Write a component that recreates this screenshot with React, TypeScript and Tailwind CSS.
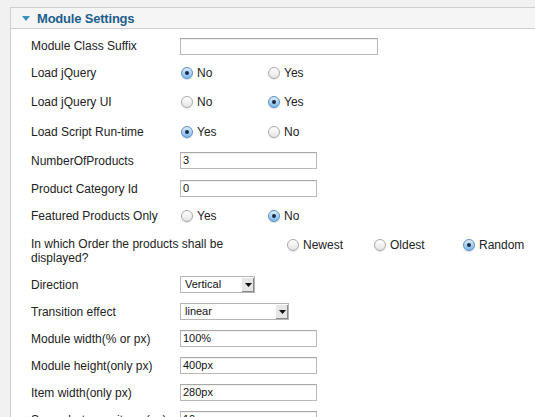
import React from "react";

const font = { fontFamily: '"Liberation Sans", Arial, sans-serif' };

function Radio({ checked, label, w = "w-[87px]" }: { checked?: boolean; label: string; w?: string }) {
  return (
    <div className={`flex items-center ${w} h-[14px]`}>
      {checked ? (
        <span className="ml-[1px] w-[12px] h-[12px] rounded-full border border-[#5b8fc4] bg-gradient-to-b from-[#d9ecfb] to-[#7cb8ec] shadow-[0_1px_1px_rgba(0,0,0,0.15)] flex items-center justify-center">
          <span className="w-[4px] h-[4px] rounded-full bg-[#1b2b44]" />
        </span>
      ) : (
        <span className="ml-[1px] w-[12px] h-[12px] rounded-full border border-[#a9a9a9] bg-gradient-to-b from-[#ffffff] to-[#e4e4e4] shadow-[0_1px_1px_rgba(0,0,0,0.1)]" />
      )}
      <span className="ml-[4px] text-[12px] text-[#222] leading-[14px]">{label}</span>
    </div>
  );
}

function TextInput({ value = "", w = "w-[137px]" }: { value?: string; w?: string }) {
  return (
    <div className={`${w} h-[17px] border border-[#b9b9b9] border-t-[#a8a8a8] bg-white shadow-[inset_0_1px_0_rgba(0,0,0,0.06)] flex items-center pl-[2px] text-[11px] text-[#111] leading-none`}>
      {value}
    </div>
  );
}

function Select({ value, w }: { value: string; w: string }) {
  return (
    <div className={`${w} h-[17px] border border-[#b5b5b5] bg-white flex items-stretch`}>
      <div className="flex-1 flex items-center pl-[4px] text-[11px] text-[#111] leading-none">{value}</div>
      <div className="w-[13px] bg-[#e6e6e6] border-l border-t border-white shadow-[inset_-1px_-1px_0_#8a8a8a] flex items-center justify-center">
        <svg width="7" height="4" viewBox="0 0 7 4"><path d="M0 0h7L3.5 4z" fill="#111" /></svg>
      </div>
    </div>
  );
}

function Row({ label, h, children }: { label: string; h: string; children: React.ReactNode }) {
  return (
    <div className={`flex items-center ${h}`}>
      <div className="w-[149px] text-[12px] text-[#222] leading-[14px]">{label}</div>
      <div className="flex items-center">{children}</div>
    </div>
  );
}

export default function App() {
  return (
    <div className="w-[535px] h-[417px] overflow-hidden bg-[#f1f1f1] pt-[7px] pl-[10px]" style={font}>
      <div className="w-[620px] border border-[#cfcfcf] bg-white">
        <div className="h-[21px] bg-[#f5f5f5] border-b border-[#cfcfcf] flex items-center pl-[11px]">
          <svg width="8" height="5" viewBox="0 0 8 5" className="mt-[1px]"><path d="M0 0h8L4 5z" fill="#3a8fbd" /></svg>
          <span className="ml-[7px] text-[13px] font-bold text-[#1c5e8e] tracking-[-0.2px] leading-none">Module Settings</span>
        </div>
        <div className="pl-[20px] pt-[4px]">
          <Row label="Module Class Suffix" h="h-[26px]"><TextInput w="w-[198px]" /></Row>
          <Row label="Load jQuery" h="h-[28px]"><Radio checked label="No" /><Radio label="Yes" /></Row>
          <Row label="Load jQuery UI" h="h-[30px]"><Radio label="No" /><Radio checked label="Yes" /></Row>
          <Row label="Load Script Run-time" h="h-[29px]"><Radio checked label="Yes" /><Radio label="No" /></Row>
          <Row label="NumberOfProducts" h="h-[29px]"><TextInput value="3" /></Row>
          <Row label="Product Category Id" h="h-[27px]"><TextInput value="0" /></Row>
          <Row label="Featured Products Only" h="h-[27px]"><Radio label="Yes" /><Radio checked label="No" /></Row>
          <div className="flex items-start h-[42px] pt-[9px]">
            <div className="w-[255px]">
              <div className="w-[225px] text-[12px] text-[#222] leading-[14px] -mt-[1px]">In which Order the products shall be displayed?</div>
            </div>
            <div className="flex items-center">
              <Radio label="Newest" />
              <Radio label="Oldest" w="w-[89px]" />
              <Radio checked label="Random" />
            </div>
          </div>
          <Row label="Direction" h="h-[27px]"><Select value="Vertical" w="w-[75px]" /></Row>
          <Row label="Transition effect" h="h-[27px]"><Select value="linear" w="w-[109px]" /></Row>
          <Row label="Module width(% or px)" h="h-[27px]"><TextInput value="100%" /></Row>
          <Row label="Module height(only px)" h="h-[27px]"><TextInput value="400px" /></Row>
          <Row label="Item width(only px)" h="h-[27px]"><TextInput value="280px" /></Row>
          <Row label="Space between items(px)" h="h-[27px]"><TextInput value="10" /></Row>
        </div>
      </div>
    </div>
  );
}
